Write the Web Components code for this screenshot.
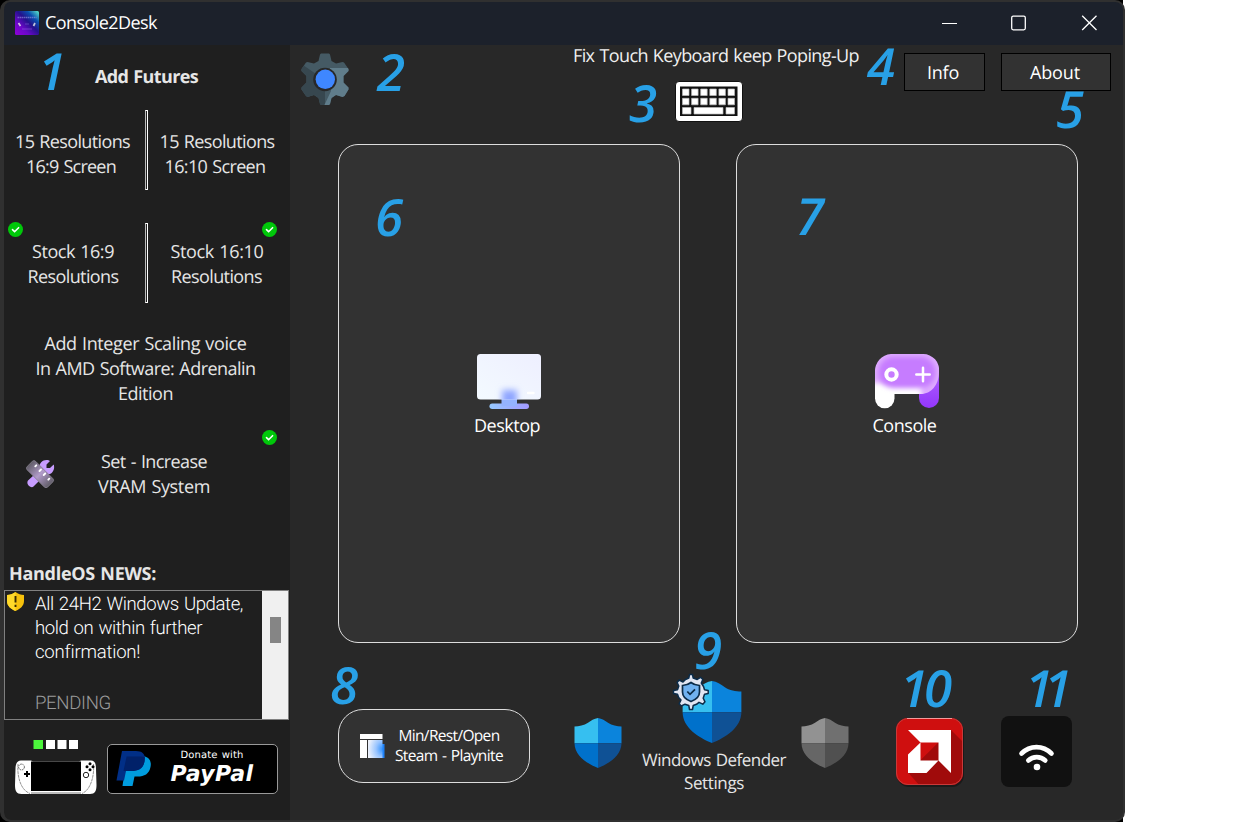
<!DOCTYPE html>
<html lang="en">
<head>
<meta charset="utf-8">
<title>Console2Desk</title>
<style>
html,body{margin:0;background:#fff;height:822px;overflow:hidden}
</style>
</head>
<body>
<app-window></app-window>
<script>
const define = (name, html, setup) => {
  const t = document.createElement('template');
  t.innerHTML = html;
  customElements.define(name, class extends HTMLElement {
    constructor() {
      super();
      this.attachShadow({ mode: 'open' }).appendChild(t.content.cloneNode(true));
    }
    connectedCallback() { if (setup) setup(this, this.shadowRoot); }
  });
};

/* One line of text, tracked so that it fills the width given in "w". */
define('fit-line', `<style>
:host{display:block;font-family:"Open Sans","Noto Sans",sans-serif;font-size:18px;line-height:25px;white-space:pre;text-rendering:geometricPrecision;flex:none}
span{display:inline-block;word-spacing:1px}
</style><span><slot></slot></span>`, (el, root) => {
  const w = parseFloat(el.getAttribute('w'));
  const span = root.querySelector('span');
  el.style.width = w + 'px';
  span.style.letterSpacing = '0px';
  const n = el.textContent.length;
  span.style.letterSpacing = ((w - span.getBoundingClientRect().width) / n) + 'px';
});

/* Blue callout number. */
define('step-mark', `<style>
:host{position:absolute;z-index:3;display:block;color:#28a0e6;font:italic 600 51px/50px "Open Sans","Noto Sans",sans-serif;text-rendering:geometricPrecision;pointer-events:none}
</style><slot></slot>`);

define('check-badge', `<style>
:host{position:absolute;display:block;width:16px;height:16px}svg{display:block}
</style><svg width="16" height="16" viewBox="0 0 16 16"><circle cx="8.500" cy="8.500" r="7.500" fill="#00c80a"/><path d="M5.500 8.600l2.100 2.100 4-4" fill="none" stroke="#fff" stroke-width="1.600" stroke-linecap="round"/></svg>`);

define('defender-shield', `<style>
:host{display:block;flex:none;width:48px;height:50px}svg{display:block;width:100%;height:100%}
</style><svg viewBox="0 0 48 50" preserveAspectRatio="none">
<defs><clipPath id="s"><path d="M24 0C28 .5 31 2.6 34 4.8C38 7.6 43 8.3 47.500 8.500V25C47.500 38 34 46 24 50C14 46 .5 38 .5 25V8.500C5 8.300 10 7.600 14 4.800C17 2.600 20 .5 24 0Z"/></clipPath></defs>
<g clip-path="url(#s)"><path fill="var(--a,#36bff0)" d="M0 0h24v25.300H0z"/><path fill="var(--b,#0b84dc)" d="M24 0h24v25.300H24z"/><path fill="var(--c,#0071cb)" d="M0 25.300h24V50H0z"/><path fill="var(--d,#0f5195)" d="M24 25.300h24V50H24z"/></g></svg>`);

define('title-bar', `<style>
:host{display:flex;align-items:center;height:43px;background:#1c212b;color:#fff;padding-left:11px;box-sizing:border-box}
.logo{display:block;margin-right:6px;margin-top:-1px}
fit-line{margin-right:auto}
.ctl{display:block;margin:-2px 19px 0 0}
</style>
<svg class="logo" width="24" height="24" viewBox="0 0 24 24"><defs><linearGradient id="g" x1="0" y1="1" x2="1" y2="0"><stop offset="0" stop-color="#9000d8"/><stop offset=".3" stop-color="#6a08c8"/><stop offset=".55" stop-color="#24128c"/><stop offset=".75" stop-color="#0a4fae"/><stop offset="1" stop-color="#5ff0cc"/></linearGradient></defs><rect width="24" height="24" rx="1.500" fill="url(#g)"/><path d="M2.500 6.500h19" stroke="#9b98e8" stroke-width="1.500" stroke-dasharray="1.500 .5" opacity=".6"/><path d="M3.500 12l2 3M18.500 15l1.500-3" stroke="#eee" stroke-width="1.700" opacity=".8"/><path d="M10 13h4M7 18h10" stroke="#9a8be8" opacity=".4"/></svg>
<fit-line w="112">Console2Desk</fit-line>
<svg class="ctl" width="162" height="20" viewBox="0 0 162 20" fill="none" stroke="#fff"><path d="M0 10.500h15"/><rect x="69.700" y="3.200" width="13.600" height="13.600" rx="1.500" stroke-width="1.300"/><path d="M140.200 2.700l14.300 14.300M154.500 2.700l-14.300 14.300" stroke-width="1.300"/></svg>`);

define('resolution-pair', `<style>
:host{display:grid;grid-template-columns:141px 3px 142px;height:80px;position:relative}
i{box-sizing:border-box;border:1px solid #fff;border-left-color:#bbb}
div{display:flex;flex-direction:column;align-items:center;padding-top:var(--t,20px)}
.l{padding-right:var(--lp,4px)}.r{padding-right:var(--rp,4px)}
</style><div class="l"><slot name="l"></slot></div><i></i><div class="r"><slot name="r"></slot></div><slot></slot>`);

define('news-box', `<style>
:host{display:flex;box-sizing:border-box;width:285px;height:130px;border:1px solid #808080;color:#fff}
svg{display:block;margin:1px 11px 0 2px;flex:none}
.t{flex:1;padding-top:1px}
fit-line{font-family:Roboto,sans-serif;font-weight:300;line-height:24px;font-size:18.600px}
.p{color:#9a9a9a;margin-top:27px}
.bar{width:26px;background:#f0f0f0;padding:26px 0 0 8px;box-sizing:border-box}
.bar b{display:block;width:11px;height:26px;background:#858585}
</style>
<svg width="17" height="19" viewBox="0 0 17 19"><path d="M8.500 0C11 2 14 2.700 17 3v6c0 5-4 8-8.500 10C4 17 0 14 0 9V3c3-.3 6-1 8.500-3z" fill="#f6c10c"/><path d="M8.500 0v19C4 17 0 14 0 9V3c3-.3 6-1 8.500-3z" fill="#ffd92a"/><path d="M8.500 4v6.500M8.500 12.800v2.200" stroke="#3a2c00" stroke-width="1.900"/></svg>
<div class="t"><fit-line w="208">All 24H2 Windows Update,</fit-line><fit-line w="167">hold on within further</fit-line><fit-line w="105">confirmation!</fit-line><fit-line class="p" w="76">PENDING</fit-line></div>
<div class="bar"><b></b></div>`);

define('handheld-icon', `<style>:host{display:block;flex:none}svg{display:block}</style>
<svg width="83" height="56" viewBox="0 0 83 56"><path fill="#4cf53c" d="M18.500 1h9.500v9h-9.500z"/><path fill="#fff" d="M31 1h9v9h-9zM42.500 1h9v9h-9zM54 1h9v9h-9z"/>
<path d="M6 21.500H16L18 22.500H64L66 21.500H76C80 21.500 81 25 81 30L81.500 46C81.500 52 80 55 75 55H6.500C1.500 55 0 52 0 46L.5 30C.5 25 2 21.500 6 21.500Z" fill="#fff"/><path d="M3 25C2 36 5 51 15 54.500M78.500 25C79.500 36 76 51 67 54.500" fill="none" stroke="#777" stroke-width=".8" stroke-dasharray="3 .6"/>
<rect x="16" y="22.500" width="50" height="29.500" fill="#000"/><path d="M16 54h50" stroke="#555" stroke-width=".8"/><circle cx="6.500" cy="28" r="2.900" fill="#fff" stroke="#333" stroke-width=".8" stroke-dasharray="1.600 .8"/><path d="M12 32v6M9 35h6" stroke="#000" stroke-width="2"/><circle cx="71" cy="36" r="2.700" fill="#fff" stroke="#222" stroke-width="1"/><g><circle cx="75" cy="24.700" r="1.500"/><circle cx="75" cy="30.700" r="1.500"/><circle cx="72" cy="27.700" r="1.500"/><circle cx="78" cy="27.700" r="1.500"/></g></svg>`);

define('paypal-button', `<style>
:host{display:flex;box-sizing:border-box;width:171px;height:50px;border:1px solid #999;border-radius:5px;background:#000;color:#fff}
svg{display:block;margin:5px 0 0 7px;flex:none}
div{flex:1;display:flex;flex-direction:column;align-items:center;padding-right:14px}
fit-line{font-family:"DejaVu Sans",sans-serif}
.d{font-size:10px;line-height:14px;margin:4px 0 0 8px}
.p{font:italic 700 22px/24px "DejaVu Sans",sans-serif;margin:0 0 0 8px}
</style>
<svg width="38" height="37" viewBox="0 0 38 37"><path d="M12 6h14c7 0 11 4 9.500 11-1.500 7-6 9.500-13 9.500h-3L17.500 36H7.500z" fill="#009cde"/><path d="M7 1h14c7 0 10 4 8.500 10.500C28 19 23 21 16 21h-5l-2 9.500H1.500z" fill="#012f87"/><path d="M11.600 6.500H26c1.500 0 2.700.2 3.800.6-.1 1.400-.2 2.900-.3 4.400C28 19 23 21 16 21h-7.500z" fill="#012169"/></svg>
<div><fit-line class="d" w="63">Donate with</fit-line><fit-line class="p" w="83">PayPal</fit-line></div>`);

define('tools-icon', `<style>:host{display:block;flex:none}svg{display:block}</style>
<svg width="29" height="28" viewBox="0 0 29 28"><defs><linearGradient id="r" x1="0" y1="0" x2="1" y2="0"><stop offset="0" stop-color="#625e69"/><stop offset=".5" stop-color="#b19bc9"/><stop offset="1" stop-color="#625e69"/></linearGradient></defs><path d="M2 20.500L13.500 10C12 5 15.500 0 20.500 0C22 0 23.500 .6 24 1L20.500 4.500V8H24L27.700 4.500C29.500 10 25.500 15.500 19.500 14.500L7.500 26.500C5 29 -.5 24 2 20.500Z" fill="#c79cff"/><rect x="-.5" y="8.200" width="29" height="12" rx="2.500" transform="rotate(45 14 14.200)" fill="url(#r)" stroke="#85808e" stroke-width=".8"/><path d="M9.300 6.300l1-1M13.500 11l1.500-1.500M17.700 15l1.500-1.500M22.300 19.700l1-1" stroke="#fff" stroke-width="1.900" stroke-linecap="round"/></svg>`);

define('side-panel', `<style>
:host{display:block;width:286px;background:#1f1f1f;color:#e6e6e6;position:relative;border-bottom-left-radius:7px}
.h{font-weight:700;margin-left:91px;padding-top:20px}
resolution-pair{margin-top:20px}
.two{margin-top:33px;--t:17px;--lp:3px;--rp:4px}
.int{display:flex;flex-direction:column;align-items:center;margin:28.500px 0 0 -3px}
.vram{display:flex;align-items:center;margin-top:43px;height:50px;padding-left:22px;position:relative}
.vram div{display:flex;flex-direction:column;align-items:center;margin-left:43px}
.vram tools-icon{margin-top:-2px}
.n{font-weight:700;margin:62px 0 3.500px 5px;}
footer{display:flex;align-items:flex-start;padding:19px 0 0 11px}
paypal-button{margin:5px 0 0 9px}
</style>
<step-mark style="left:34px;top:0px">1</step-mark>
<fit-line class="h" w="103">Add Futures</fit-line>
<resolution-pair><fit-line slot="l" w="115">15 Resolutions</fit-line><fit-line slot="l" w="90" style="margin-left:-3px">16:9 Screen</fit-line><fit-line slot="r" w="115">15 Resolutions</fit-line><fit-line slot="r" w="101" style="margin-left:-4px">16:10 Screen</fit-line></resolution-pair>
<resolution-pair class="two"><fit-line slot="l" w="82">Stock 16:9</fit-line><fit-line slot="l" w="91">Resolutions</fit-line><fit-line slot="r" w="93">Stock 16:10</fit-line><fit-line slot="r" w="91" style="margin-left:-1px">Resolutions</fit-line><check-badge style="left:3px;top:-2px"></check-badge><check-badge style="left:257px;top:-2px"></check-badge></resolution-pair>
<div class="int"><fit-line w="202">Add Integer Scaling voice</fit-line><fit-line w="220">In AMD Software: Adrenalin</fit-line><fit-line w="55">Edition</fit-line></div>
<div class="vram"><tools-icon></tools-icon><div><fit-line w="106">Set - Increase</fit-line><fit-line w="112">VRAM System</fit-line></div><check-badge style="left:257px;top:-21px"></check-badge></div>
<fit-line class="n" w="147">HandleOS NEWS:</fit-line>
<news-box></news-box>
<footer><handheld-icon></handheld-icon><paypal-button></paypal-button></footer>`);

define('gear-icon', `<style>:host{display:block;flex:none}svg{display:block}</style>
<svg width="50" height="53" viewBox="0 0 50 53"><defs><clipPath id="c"><path d="M20 1.500L21 .5H29L30 1.500L31.500 8L36 10.500L42.500 9L44 9.500L48.500 16L48.500 18L43.500 23V29.500L48.500 34.500V36.500L44.500 43L42.500 44L36 42L31.500 45L30 51L29 52H21L20 51L18.500 45L14 42L7.500 44L6 43L1.500 36.500V34.500L6.500 29.500V23L1.500 18V16L6 9.500L7.500 9L14 10.500L18.500 8Z"/></clipPath></defs>
<g clip-path="url(#c)"><path fill="#455a64" d="M0 0h50v53H0z"/><path fill="#37474f" d="M0 10L25 27V53H0z"/><path fill="#607d8b" d="M30 15H50V53H24L31 38z"/></g><circle cx="25" cy="26.500" r="11.800" fill="#282828"/><circle cx="25.300" cy="26.300" r="9.700" fill="#3f87ff"/></svg>`);

define('keyboard-icon', `<style>:host{display:block;flex:none}svg{display:block}</style>
<svg width="68" height="41" viewBox="0 0 68 41"><rect x=".5" y=".5" width="67" height="40" rx="3.500" fill="#fff" stroke="#111"/><path fill="#111" d="M5 5.500h57.500v29.500H5z"/><path fill="#fff" stroke="#bbb" stroke-width=".7" d="M7.500 8h6.500v6.500H7.500zM16.600 8h6.500v6.500h-6.500zM25.700 8h6.500v6.500h-6.500zM34.800 8h6.500v6.500h-6.500zM43.900 8h6.500v6.500h-6.500zM53 8h6.500v6.500H53zM7.500 17.300h6.500v6.500H7.500zM16.600 17.300h6.500v6.500h-6.500zM25.700 17.300h6.500v6.500h-6.500zM34.800 17.300h6.500v6.500h-6.500zM43.900 17.300h6.500v6.500h-6.500zM53 17.300h6.500v6.500H53zM7.500 26.500h8.500v6.500H7.500zM19 26.500h29v6.500H19zM51 26.500h8.500v6.500H51z"/></svg>`);

define('flat-button', `<style>:host{display:flex;box-sizing:border-box;height:38px;border:1px solid #000;background:#323232;color:#fff;justify-content:center;position:relative;z-index:4;padding-top:7px}</style><slot></slot>`);

define('mode-card', `<style>
:host{display:flex;flex-direction:column;align-items:center;box-sizing:border-box;width:342px;height:499px;border:1px solid #ddd;border-radius:20px;background:#323232;color:#fff;padding-top:209px;position:relative}
</style><slot name="icon"></slot><slot></slot>`);

define('desktop-icon', `<style>:host{display:block}svg{display:block}</style>
<svg width="64" height="56" viewBox="0 0 64 56"><defs><linearGradient id="m" x1="0" y1="0" x2="1" y2="0"><stop offset="0" stop-color="#96c8ff"/><stop offset="1" stop-color="#a39aff"/></linearGradient><linearGradient id="w" x1="0" y1="1" x2="1" y2="0"><stop offset="0" stop-color="#f3faff"/><stop offset="1" stop-color="#eeefff"/></linearGradient><filter id="b" x="-100%" y="-100%" width="300%" height="300%"><feGaussianBlur stdDeviation="3.200"/></filter><clipPath id="q"><rect width="64" height="45.500" rx="3.500"/></clipPath></defs>
<rect x="12.500" y="49.500" width="39.500" height="5.500" rx="2.700" fill="url(#m)"/><path d="M24.500 44h15.500v8H24.500z" fill="#94b3ff"/><rect width="64" height="45.500" rx="3.500" fill="url(#w)"/><g clip-path="url(#q)"><path d="M25 36h15v16H25z" fill="#8fa5ff" filter="url(#b)"/></g><path d="M51 39h5.500" stroke="#fff" stroke-width="2.400" stroke-linecap="round"/></svg>`);

define('console-icon', `<style>:host{display:block}svg{display:block}</style>
<svg width="64" height="56" viewBox="0 0 64 56"><defs><linearGradient id="p" x1="0" y1="0" x2="0" y2="1"><stop offset="0" stop-color="#b265ff"/><stop offset="1" stop-color="#9336fb"/></linearGradient><filter id="b" x="-30%" y="-30%" width="160%" height="160%"><feGaussianBlur stdDeviation="2.600"/></filter><clipPath id="q"><path id="k" d="M16 0H48A16 16 0 0 1 64 18C64 31 56 40 46 40H0V18A17 17 0 0 1 16 0Z"/></clipPath></defs>
<path d="M0 16H19.500V44.500A9.750 9.750 0 0 1 0 44.500Z" fill="#fff"/><path d="M44 30L64 14V44A10 10 0 0 1 44 44Z" fill="url(#p)"/><g clip-path="url(#q)"><path fill="#deabff" d="M0 0h64v40H0z"/><path d="M-6 29H46V48H-6z" fill="#fff" filter="url(#b)"/><rect x="3.500" y="3" width="57" height="31" rx="15" fill="#c67cff" filter="url(#b)"/></g><circle cx="16.500" cy="20.500" r="5.200" fill="none" stroke="#fff" stroke-width="4"/><path d="M48 13.800v13.400M41.300 20.500h13.400" stroke="#fff" stroke-width="2.500" stroke-linecap="round"/></svg>`);

define('launcher-button', `<style>
:host{display:flex;box-sizing:border-box;width:192px;height:74px;border:1px solid #ddd;border-radius:25px;background:#323232;color:#fff}
svg{display:block;margin:24px 0 0 21px}
div{display:flex;flex-direction:column;align-items:center;margin:15px 0 0 10px}
fit-line{font-size:15.500px;line-height:20px}
</style><svg width="25" height="25" viewBox="0 0 25 25"><defs><radialGradient id="g" cx="1" cy=".5" r="1"><stop offset="0" stop-color="#3393ff"/><stop offset=".45" stop-color="#9ac5ff"/><stop offset="1" stop-color="#eef2fb"/></radialGradient></defs><path fill="#fff" d="M0 0h22.500v5H0zM0 6h7v18H0z"/><path fill="#1e82fa" d="M21 10h3.500v14H21z"/><path fill="url(#g)" d="M8 6h14.500v18H8z"/></svg><div><fit-line w="101">Min/Rest/Open</fit-line><fit-line w="108">Steam - Playnite</fit-line></div>`);

define('defender-settings', `<style>
:host{display:flex;flex-direction:column;align-items:center;width:144px;color:#e6e6e6;position:relative}
defender-shield{width:60px;height:62px;margin-left:-5px;margin-bottom:5px}
svg{position:absolute;left:30px;top:-8px}
fit-line{font-size:17px;line-height:23px}
</style><defender-shield></defender-shield>
<svg width="38" height="38" viewBox="0 0 38 38"><g fill="#e2e6f2" stroke="#0c2c49" stroke-width="1.500" stroke-linejoin="round"><path d="M16.800 5L17.500 1.500H20.500L21.200 5L25.200 6.500L28.500 4.300L30.900 6.400L29.300 10L31.500 13.500L32.500 16.800L36.200 17.500V20.500L32.500 21.200L31.200 25.200L33 28.800L30.800 31.200L27 29.300L24.500 31.300L21.200 32.500L20.500 36.500H17.500L16.800 32.500L13 31.200L9.300 33L7.100 30.800L9 27L6.700 24.500L5.500 21.200L1.500 20.500V17.500L5.500 16.800L6.800 13L5.100 9.500L7.200 7L11 9L13.500 6.500Z"/></g><path d="M19 9.500C21.500 11.500 24 12.300 27.500 12.500V19C27.500 24 23 27 19 28.500C15 27 10.500 24 10.500 19V12.500C14 12.300 16.500 11.500 19 9.500Z" fill="#70b1f0" stroke="#0c2c49" stroke-width="1.700"/><path d="M15.300 18.500l2.700 2.800 5-5" fill="none" stroke="#0c2c49" stroke-width="1.800"/></svg>
<fit-line w="144">Windows Defender</fit-line><fit-line w="60">Settings</fit-line>`);

define('amd-tile', `<style>:host{display:block;flex:none}svg{display:block}</style>
<svg width="70" height="71" viewBox="0 0 70 71"><defs><clipPath id="c"><rect x="1" y="1" width="67" height="67" rx="12"/></clipPath></defs><rect x="2" y="3" width="67" height="67" rx="12" fill="#111" opacity=".6"/><g clip-path="url(#c)"><path fill="#cf0f0f" d="M0 0h70v70H0z"/><path fill="#a00b0b" d="M56 13L70 27V70H26L13 55.500z"/></g><rect x="1.500" y="1.500" width="66" height="66" rx="11.500" fill="none" stroke="#c83a3a"/><path d="M12 1.500H57" stroke="#f39a9a"/><path fill="#fff" d="M13 13H56V56L43.500 43.500V25.500H25.500z"/><path fill="#fff" d="M25.500 25.500V43.500H43.500L31.500 56H13V37.500z"/></svg>`);

define('wifi-tile', `<style>:host{display:block;flex:none}svg{display:block}</style>
<svg width="71" height="71" viewBox="0 0 71 71"><rect width="71" height="71" rx="8" fill="#111"/><g fill="none" stroke="#fff" stroke-width="4.600" stroke-linecap="round"><path d="M20.500 37.500C29 29 42 29 50.500 37.500"/><path d="M27.300 44.500C32 40 39.500 40 44.300 44.500"/></g><circle cx="36" cy="51" r="3.300" fill="#fff"/></svg>`);

define('main-panel', `<style>
:host{display:block;flex:1;background:#282828;position:relative;color:#fff;border-bottom-right-radius:7px}
.top{display:flex;align-items:flex-start;height:99px;box-sizing:border-box;padding:8px 12px 0 10px}
.kb{display:flex;flex-direction:column;align-items:center;margin:-9.500px 45px 0 223px;color:#f0f0f0}
.kb keyboard-icon{margin:12px 0 0 -14px}
.cards{display:flex;gap:56px;padding-left:48px}
.cards fit-line{margin-top:3.500px}
.bottom{display:flex;align-items:flex-start;padding-left:48px}
</style>
<div class="top"><gear-icon></gear-icon><div class="kb"><fit-line w="286">Fix Touch Keyboard keep Poping-Up</fit-line><keyboard-icon></keyboard-icon></div>
<flat-button style="width:81px;margin-right:16px"><fit-line w="32" style="margin-left:-3px">Info</fit-line></flat-button><flat-button style="width:110px"><fit-line w="50" style="margin-left:-2px">About</fit-line></flat-button></div>
<div class="cards"><mode-card><desktop-icon slot="icon"></desktop-icon><fit-line w="66" style="margin-left:-4px">Desktop</fit-line></mode-card><mode-card><console-icon slot="icon"></console-icon><fit-line w="64" style="margin-left:-5px">Console</fit-line></mode-card></div>
<div class="bottom"><launcher-button style="margin-top:66px"></launcher-button><defender-shield style="margin:75px 0 0 44px"></defender-shield><defender-settings style="margin:38px 0 0 20px"></defender-settings><defender-shield style="margin:75px 0 0 15px;--a:#929292;--b:#707070;--c:#666;--d:#505050"></defender-shield><amd-tile style="margin:74px 0 0 46px"></amd-tile><wifi-tile style="margin:73px 0 0 36px"></wifi-tile></div>
<step-mark style="left:87px;top:1px">2</step-mark>
<step-mark style="left:339px;top:32px">3</step-mark>
<step-mark style="left:577px;top:-5px">4</step-mark>
<step-mark style="left:766px;top:38px">5</step-mark>
<step-mark style="left:85px;top:146px">6</step-mark>
<step-mark style="left:506px;top:145px">7</step-mark>
<step-mark style="left:40px;top:614px">8</step-mark>
<step-mark style="left:404px;top:579px">9</step-mark>
<step-mark style="left:610px;top:617px;letter-spacing:-4px">10</step-mark>
<step-mark style="left:735px;top:617px;letter-spacing:-9px">11</step-mark>`);

define('app-window', `<style>
:host{display:block;width:1125px;height:822px;background:linear-gradient(#000,#000) 0 0/12px 12px no-repeat,linear-gradient(#000,#000) 1115px 0/8px 9px no-repeat,linear-gradient(#000,#000) 0 810px/12px 12px no-repeat,linear-gradient(#000,#000) 1115px 812px/8px 10px no-repeat}
.frame{box-sizing:border-box;height:822px;border:solid #303030;border-width:2px 2px 2px 4px;border-radius:10px;overflow:hidden;background:#303030}
.body{display:flex;height:775px}
</style><div class="frame"><title-bar></title-bar><div class="body"><side-panel></side-panel><main-panel></main-panel></div></div>`);
</script>
</body>
</html>
